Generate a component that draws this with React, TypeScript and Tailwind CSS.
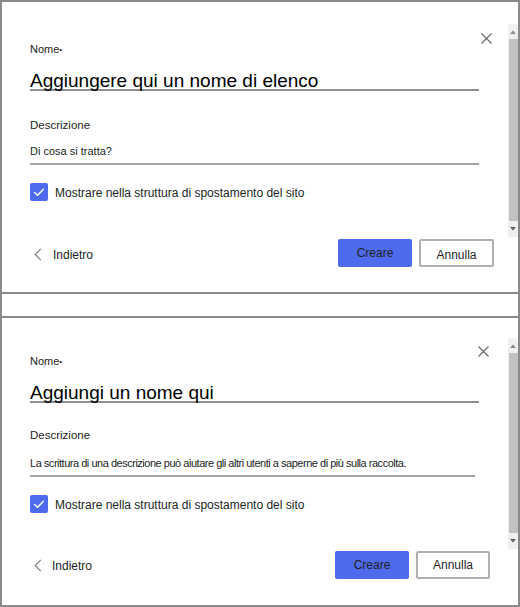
import React from "react";

const FONT = { fontFamily: '"Liberation Sans", Arial, sans-serif' };

function CloseIcon() {
  return (
    <svg width="11" height="11" viewBox="0 0 11 11" fill="none">
      <path d="M0.5 0.5 L10.5 10.5 M10.5 0.5 L0.5 10.5" stroke="#6b6b6b" strokeWidth="1.2" />
    </svg>
  );
}

function Chevron() {
  return (
    <svg width="8" height="13" viewBox="0 0 8 13" fill="none">
      <path d="M6.8 0.8 L1.2 6.5 L6.8 12.2" stroke="#7a7a7a" strokeWidth="1.1" />
    </svg>
  );
}

function Check() {
  return (
    <svg width="18" height="18" viewBox="0 0 18 18" fill="none">
      <path d="M4.6 9.4 L7.6 12.2 L13.4 6.2" stroke="#ffffff" strokeWidth="1.4" strokeLinecap="round" strokeLinejoin="round" />
    </svg>
  );
}

function Scrollbar({ top }: { top: boolean }) {
  return (
    <div className={top ? "w-[10px] mt-[22px] h-[213px] bg-[#f0f0f0] flex flex-col" : "w-[10px] mt-[20px] h-[211px] bg-[#f0f0f0] flex flex-col"}>
      <div className="h-[15px] flex items-center justify-center">
        <svg width="6" height="4" viewBox="0 0 6 4">
          <path d="M0 4 L3 0.5 L6 4 Z" fill="#8a8a8a" />
        </svg>
      </div>
      <div className="flex-1 bg-[#c1c1c1] ml-[1px]" />
      <div className="h-[16px] flex items-center justify-center">
        <svg width="6" height="4" viewBox="0 0 6 4">
          <path d="M0 0 L3 3.5 L6 0 Z" fill="#606060" />
        </svg>
      </div>
    </div>
  );
}

function Panel({
  top,
  title,
  desc,
}: {
  top: boolean;
  title: string;
  desc: string;
}) {
  return (
    <div className="relative flex flex-row h-full">
      <button
        className={
          top
            ? "absolute top-[31px] right-[26px] w-[11px] h-[11px] flex"
            : "absolute top-[28px] right-[29px] w-[11px] h-[11px] flex"
        }
      >
        <CloseIcon />
      </button>
      <div className={top ? "flex-1 flex flex-col pl-[28px] pr-[14px] pt-[40px]" : "flex-1 flex flex-col pl-[28px] pr-[18px] pt-[36px]"}>
        <div className="text-[11px] leading-[14px] text-[#252423]">
          Nome<span className="text-[8px] align-[1px]">•</span>
        </div>
        <div
          className={
            top
              ? "mt-[15px] mr-[15px] text-[19px] leading-[17px] text-[#000] border-b-2 border-[#8f8f8f] whitespace-nowrap"
              : "mt-[15px] mr-[11px] text-[19px] leading-[17px] text-[#000] border-b-2 border-[#8f8f8f] whitespace-nowrap"
          }
        >
          {title}
        </div>
        <div className={top ? "mt-[27px] text-[11.5px] leading-[14px] text-[#252423]" : "mt-[25px] text-[11.5px] leading-[14px] text-[#252423]"}>
          Descrizione
        </div>
        <div
          className={
            top
              ? "mt-[12px] mr-[15px] pb-[5px] text-[11px] leading-[14px] text-[#201f1e] border-b-2 border-[#a3a3a3] whitespace-nowrap"
              : "mt-[14px] mr-[15px] pb-[5px] text-[11px] leading-[14px] tracking-[-0.48px] text-[#201f1e] border-b-2 border-[#a3a3a3] whitespace-nowrap"
          }
        >
          {desc}
        </div>
        <div className="mt-[18px] flex flex-row items-start">
          <div className="w-[18px] h-[18px] rounded-[2px] bg-[#4f6bed] flex">
            <Check />
          </div>
          <div className="ml-[7px] mt-[3px] text-[12px] leading-[14px] text-[#201f1e] whitespace-nowrap">
            Mostrare nella struttura di spostamento del sito
          </div>
        </div>
        <div className="mt-[38px] flex flex-row items-center justify-between">
          <div className={top ? "flex flex-row items-center mt-[3px] pl-[4px]" : "flex flex-row items-center mt-[1px] pl-[4px]"}>
            <Chevron />
            <span className={top ? "ml-[11px] text-[12px] leading-[14px] text-[#201f1e]" : "ml-[10px] text-[12px] leading-[14px] text-[#201f1e]"}>Indietro</span>
          </div>
          <div className="flex flex-row gap-[7px]">
            <button className="w-[74px] h-[28px] rounded-[2px] bg-[#4f6bed] text-[12px] leading-[14px] text-[#1f1f1f] flex items-center justify-center">
              Creare
            </button>
            <button className={top ? "w-[75px] h-[28px] rounded-[2px] bg-white border-2 border-[#b0b0b0] text-[12px] leading-[14px] text-[#1f1f1f] flex items-center justify-center pt-[3px]" : "w-[74px] h-[28px] rounded-[2px] bg-white border-2 border-[#b0b0b0] text-[12px] leading-[14px] text-[#1f1f1f] flex items-center justify-center"}>
              Annulla
            </button>
          </div>
        </div>
      </div>
      <Scrollbar top={top} />
    </div>
  );
}

export default function App() {
  return (
    <div style={FONT} className="w-[520px] h-[607px] bg-white border-2 border-[#8a8a8a] flex flex-col overflow-hidden">
      <div className="h-[292px] border-b-2 border-[#8a8a8a]">
        <Panel top={true} title="Aggiungere qui un nome di elenco" desc="Di cosa si tratta?" />
      </div>
      <div className="h-[22px]" />
      <div className="flex-1 border-t-2 border-[#8a8a8a]">
        <Panel
          top={false}
          title="Aggiungi un nome qui"
          desc="La scrittura di una descrizione può aiutare gli altri utenti a saperne di più sulla raccolta."
        />
      </div>
    </div>
  );
}
